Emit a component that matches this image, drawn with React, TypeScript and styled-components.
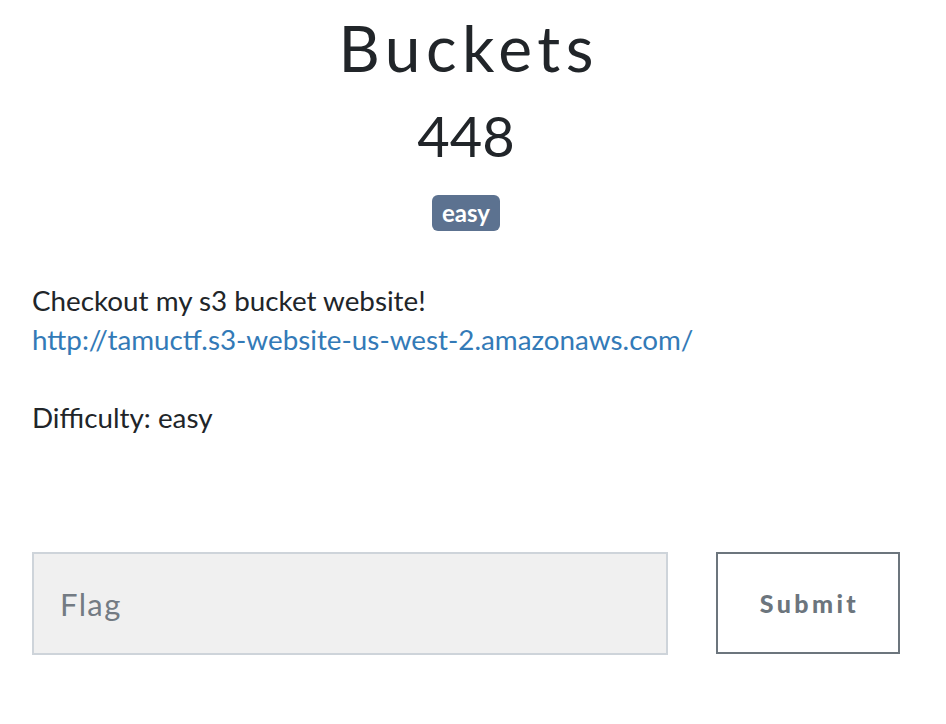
import React from "react";
import styled, { createGlobalStyle } from "styled-components";

const Global = createGlobalStyle`
  html, body { margin: 0; padding: 0; background: #ffffff; }
  body { font-family: Lato, "Noto Sans", "Liberation Sans", sans-serif; color: #212529; }
  * { box-sizing: border-box; }
`;

const Page = styled.div`
  width: 868px;
  margin-left: 32px;
  display: flex;
  flex-direction: column;
`;

const Header = styled.div`
  display: flex;
  flex-direction: column;
  align-items: center;
`;

const Title = styled.h2`
  margin: 10px 0 0;
  font-family: Lato, "Open Sans", sans-serif;
  font-weight: 400;
  font-size: 64px;
  line-height: 76px;
  letter-spacing: 5.5px;
  padding-left: 5.5px;
  color: #212529;
`;

const Value = styled.h3`
  margin: 16px 0 0;
  font-family: Lato, sans-serif;
  font-weight: 400;
  font-size: 56px;
  line-height: 67px;
  color: #212529;
`;

const Badge = styled.span`
  margin-top: 26px;
  display: inline-block;
  height: 36px;
  line-height: 35px;
  padding: 0 10px;
  border-radius: 6px;
  background: #5c7290;
  color: #ffffff;
  font-family: Lato, sans-serif;
  font-weight: 700;
  font-size: 24px;
`;

const Description = styled.div`
  margin-top: 50px;
  font-size: 27.8px;
  line-height: 39px;
  color: #212529;
`;

const Para = styled.p<{ $gap?: number }>`
  margin: 0 0 ${(p) => p.$gap ?? 0}px;
`;

const Link = styled.a`
  color: #337ab7;
  text-decoration: none;
`;

const Form = styled.form`
  margin-top: 115px;
  display: flex;
  gap: 48px;
`;

const FlagInput = styled.input`
  width: 636px;
  height: 103px;
  border: 2px solid #ced4da;
  background: #f0f0f0;
  padding: 0 0 0 26px;
  font-family: Lato, sans-serif;
  font-size: 31px;
  letter-spacing: 1.4px;
  color: #495057;
  outline: none;
  &::placeholder { color: #737b83; opacity: 1; }
`;

const SubmitButton = styled.button`
  width: 184px;
  height: 102px;
  border: 2px solid #6c757d;
  background: #ffffff;
  color: #6c757d;
  font-family: Lato, sans-serif;
  font-weight: 900;
  font-size: 25px;
  letter-spacing: 3.4px;
  padding: 0 0 0 3px;
  cursor: pointer;
`;

export default function App() {
  return (
    <>
      <Global />
      <Page>
        <Header>
          <Title>Buckets</Title>
          <Value>448</Value>
          <Badge>easy</Badge>
        </Header>
        <Description>
          <Para $gap={39}>
            Checkout my s3 bucket website!
            <br />
            <Link href="#">http://tamuctf.s3-website-us-west-2.amazonaws.com/</Link>
          </Para>
          <Para>Difficulty: easy</Para>
        </Description>
        <Form onSubmit={(e) => e.preventDefault()}>
          <FlagInput placeholder="Flag" />
          <SubmitButton type="submit">Submit</SubmitButton>
        </Form>
      </Page>
    </>
  );
}
